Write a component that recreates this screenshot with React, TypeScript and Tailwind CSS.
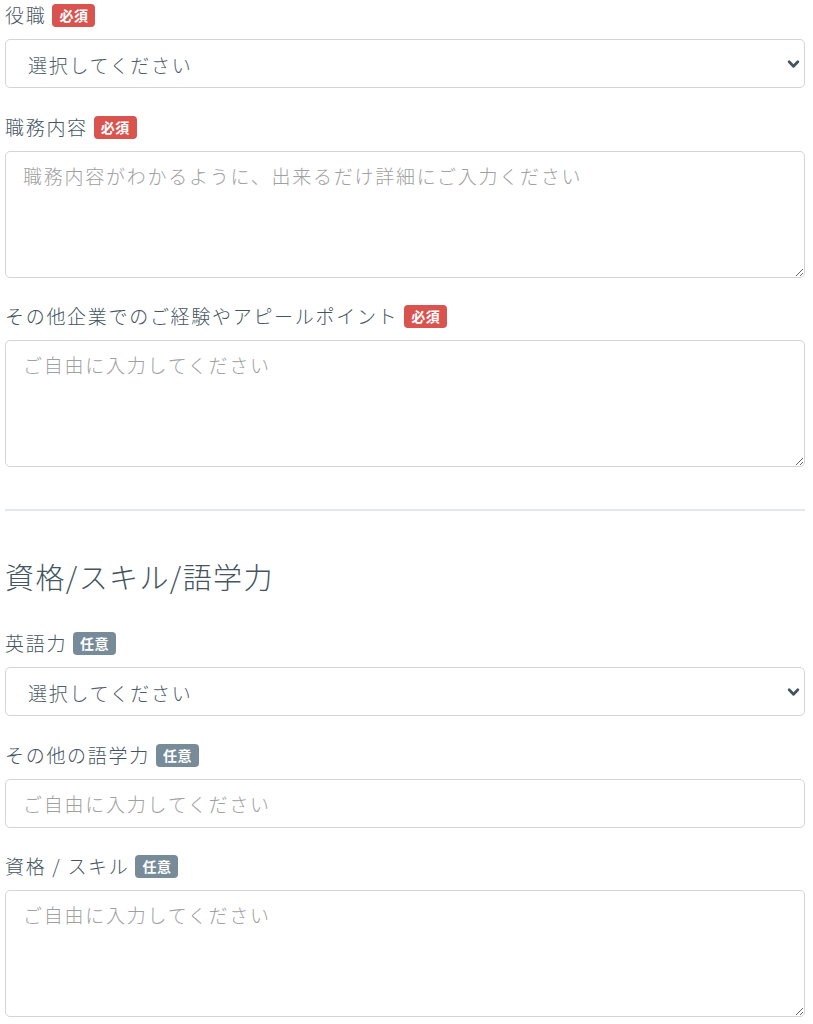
import React from "react";

const font = { fontFamily: '"Noto Sans CJK JP", "Noto Sans", sans-serif' };

function Badge({ required }: { required: boolean }) {
  return (
    <span
      className={
        "ml-[6px] inline-flex h-[23px] items-center rounded-[4px] px-[7px] text-[14px] font-bold leading-none tracking-[0.5px] text-white " +
        (required ? "bg-[#d9534f]" : "bg-[#778c98]")
      }
    >
      {required ? "必須" : "任意"}
    </span>
  );
}

function Label({ text, required }: { text: string; required: boolean }) {
  return (
    <div className="mb-[10px] flex h-[28px] items-center text-[19px] font-light tracking-[1.7px] text-[#44555f]">
      <span>{text}</span>
      <Badge required={required} />
    </div>
  );
}

function Select({ h }: { h: string }) {
  return (
    <div
      className={
        "relative flex w-full items-center rounded-[5px] border border-[#d4d4d4] bg-white pl-[22px] pt-[4px] text-[19px] font-light tracking-[1.7px] text-[#4d5e68] " +
        h
      }
    >
      <span>選択してください</span>
      <svg
        className="absolute right-[4px] top-1/2 -translate-y-1/2"
        width="13"
        height="13"
        viewBox="0 0 12 12"
      >
        <path d="M2 4 L6 8 L10 4" fill="none" stroke="#44555f" strokeWidth="2.6" strokeLinecap="round" strokeLinejoin="round" />
      </svg>
    </div>
  );
}

function Area({ placeholder }: { placeholder: string }) {
  return (
    <textarea
      placeholder={placeholder}
      className="block h-[127px] w-full rounded-[5px] border border-[#d4d4d4] bg-white px-[17px] py-[10px] text-[19px] font-light tracking-[1.75px] text-[#566770] outline-none placeholder:text-[#a0a0a0]"
      style={font}
    />
  );
}

export default function App() {
  return (
    <div className="min-h-[1024px] bg-white pl-[5px] pr-[8px] pt-[1px]" style={font}>
      <Label text="役職" required />
      <Select h="h-[49px]" />

      <div className="mt-[25px]">
        <Label text="職務内容" required />
        <Area placeholder="職務内容がわかるように、出来るだけ詳細にご入力ください" />
      </div>

      <div className="mt-[24px]">
        <Label text="その他企業でのご経験やアピールポイント" required />
        <Area placeholder="ご自由に入力してください" />
      </div>

      <div className="mt-[42px] h-[2px] w-full bg-[#e3e7ea]" />

      <h2 className="mt-[45px] h-[40px] text-[29px] font-light leading-[40px] tracking-[1.4px] text-[#44555f]">
        資格/スキル/語学力
      </h2>

      <div className="mt-[33px]">
        <Label text="英語力" required={false} />
        <Select h="h-[49px]" />
      </div>

      <div className="mt-[25px]">
        <Label text="その他の語学力" required={false} />
        <input
          placeholder="ご自由に入力してください"
          className="block h-[49px] w-full rounded-[5px] border border-[#d4d4d4] bg-white px-[17px] text-[19px] font-light tracking-[1.75px] text-[#566770] outline-none placeholder:text-[#a0a0a0]"
          style={font}
        />
      </div>

      <div className="mt-[24px]">
        <Label text="資格 / スキル" required={false} />
        <Area placeholder="ご自由に入力してください" />
      </div>
    </div>
  );
}
